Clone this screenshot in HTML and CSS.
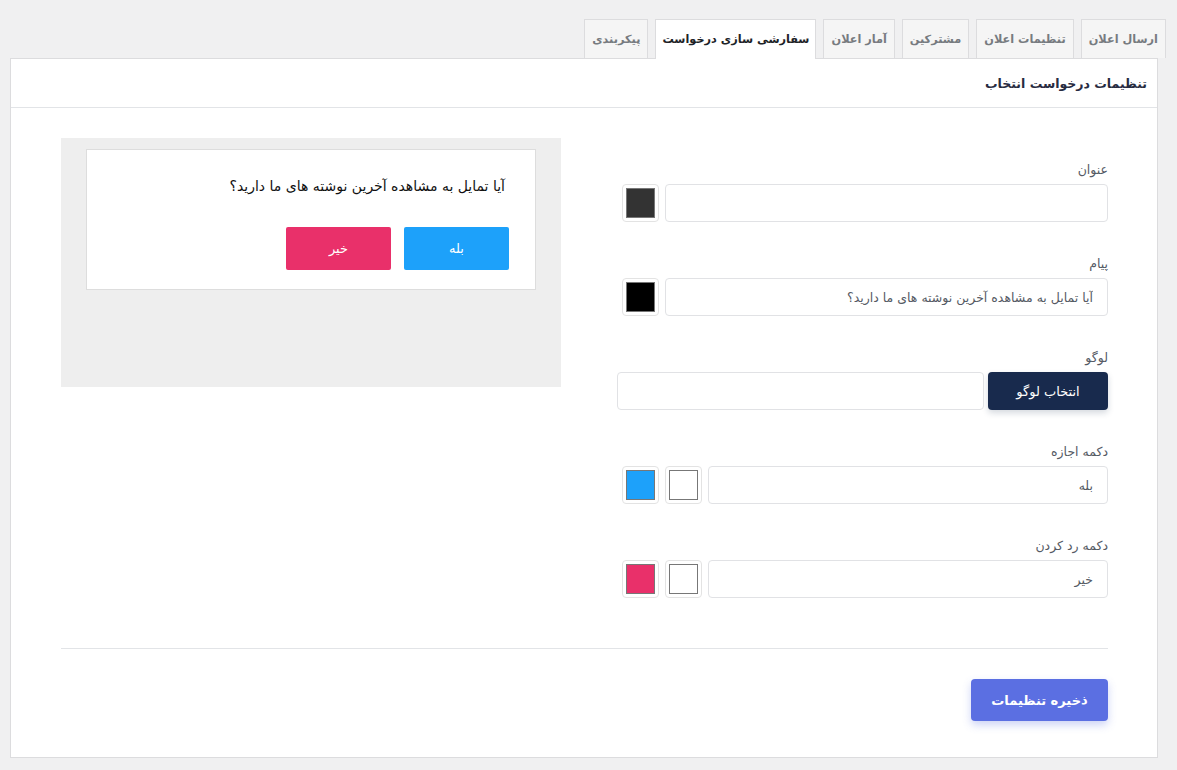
FILE: index.html
```html
<!DOCTYPE html>
<html lang="fa" dir="rtl">
<head>
	<meta charset="UTF-8">
	<meta name="viewport" content="width=device-width, initial-scale=1.0">
	<title>سفارشی سازی درخواست</title>
	<link rel="stylesheet" href="styles.css">
</head>
<body>
	<div class="wrap">
		<!-- تب ها -->
		<nav class="tabs">
			<a class="tab">ارسال اعلان</a>
			<a class="tab">تنظیمات اعلان</a>
			<a class="tab">مشترکین</a>
			<a class="tab">آمار اعلان</a>
			<a class="tab active">سفارشی سازی درخواست</a>
			<a class="tab">پیکربندی</a>
		</nav>

		<div class="panel">
			<div class="panel-head">تنظیمات درخواست انتخاب</div>

			<div class="panel-body">
				<div class="layout">
					<!-- فرم تنظیمات -->
					<form class="fields">
						<div class="field">
							<label>عنوان</label>
							<div class="row">
								<input type="text" class="text" value="">
								<span class="swatch"><i style="background: #333333;"></i></span>
							</div>
						</div>
						<div class="field">
							<label>پیام</label>
							<div class="row">
								<input type="text" class="text" value="آیا تمایل به مشاهده آخرین نوشته های ما دارید؟">
								<span class="swatch"><i style="background: #000000;"></i></span>
							</div>
						</div>
						<div class="field">
							<label>لوگو</label>
							<div class="row logo-row">
								<button type="button" class="btn-logo">انتخاب لوگو</button>
								<input type="text" class="text" value="">
							</div>
						</div>
						<div class="field">
							<label>دکمه اجازه</label>
							<div class="row">
								<input type="text" class="text" value="بله">
								<span class="swatch"><i style="background: #ffffff;"></i></span>
								<span class="swatch"><i style="background: #1da1fa;"></i></span>
							</div>
						</div>
						<div class="field">
							<label>دکمه رد کردن</label>
							<div class="row">
								<input type="text" class="text" value="خیر">
								<span class="swatch"><i style="background: #ffffff;"></i></span>
								<span class="swatch"><i style="background: #e9306a;"></i></span>
							</div>
						</div>
					</form>

					<!-- پیش نمایش -->
					<div class="preview">
						<div class="prompt">
							<p class="prompt-text">آیا تمایل به مشاهده آخرین نوشته های ما دارید؟</p>
							<div class="prompt-buttons">
								<span class="pbtn yes">بله</span>
								<span class="pbtn no">خیر</span>
							</div>
						</div>
					</div>
				</div>

				<hr class="sep">

				<div class="actions">
					<button type="button" class="btn-save">ذخیره تنظیمات</button>
				</div>
			</div>
		</div>
	</div>
</body>
</html>
```

FILE: styles.css
```css
* {
	box-sizing: border-box;
	margin: 0px;
	padding: 0px;
}

body {
	background-color: #f0f0f1;
	font-family: "DejaVu Sans", "Noto Sans", sans-serif;
	color: #3c434a;
}

.wrap {
	padding: 19px 19px 0px 10px;
}

/* تب ها */
.tabs {
	display: flex;
	gap: 7px;
	margin-right: -8px;
	height: 39px;
}

.tab {
	display: flex;
	align-items: center;
	height: 39px;
	padding: 0px 7px;
	background-color: #f5f5f5;
	border: 1px solid #dcdcde;
	border-bottom: none;
	font-size: 11.3px;
	font-weight: bold;
	color: #777b80;
	cursor: pointer;
}

.tab.active {
	position: relative;
	z-index: 1;
	height: 40px;
	padding: 0px 6px;
	background-color: #fff;
	color: #1d2327;
	letter-spacing: -0.2px;
}

/* پنل */
.panel {
	background-color: #fff;
	border: 1px solid #dcdcde;
	height: 700px;
}

.panel-head {
	height: 49px;
	padding: 0px 10px;
	display: flex;
	align-items: center;
	border-bottom: 1px solid #e2e4e7;
	font-size: 12.5px;
	font-weight: bold;
	color: #272b41;
}

.panel-body {
	padding: 30px 49px 0px 50px;
}

.layout {
	display: grid;
	grid-template-columns: 491px 500px;
	gap: 56px;
	align-items: start;
}

/* فرم */
.fields {
	display: flex;
	flex-direction: column;
	gap: 32px;
	padding-top: 22px;
}

.field label {
	display: block;
	height: 20px;
	line-height: 20px;
	margin-bottom: 4px;
	font-size: 12.5px;
	color: #555a64;
}

.row {
	display: flex;
	gap: 6px;
	padding-left: 5px;
}

.row.logo-row {
	gap: 4px;
	padding-left: 0px;
}

.text {
	flex: 1;
	min-width: 0;
	height: 38px;
	padding: 0px 14px;
	border: 1px solid #e1e2e5;
	border-radius: 4px;
	background-color: #fff;
	font-family: inherit;
	font-size: 12.5px;
	color: #555a64;
	outline: none;
}

.swatch {
	flex: none;
	width: 37px;
	height: 38px;
	padding: 3px;
	border: 1px solid #e3e3e3;
	border-radius: 4px;
	display: flex;
}

.swatch i {
	flex: 1;
	border: 1px solid #777;
}

.btn-logo {
	flex: none;
	width: 120px;
	height: 38px;
	border: none;
	border-radius: 4px;
	background-color: #182a4d;
	color: #fff;
	font-family: inherit;
	font-size: 13px;
	box-shadow: 0px 3px 6px rgba(24, 42, 77, 0.18);
	cursor: pointer;
}

/* پیش نمایش */
.preview {
	height: 249px;
	padding: 11px 25px 0px 25px;
	background-color: #eeeeee;
}

.prompt {
	height: 141px;
	padding: 24px 26px 0px 26px;
	background-color: #fff;
	border: 1px solid #dddddd;
}

.prompt-text {
	height: 24px;
	line-height: 24px;
	padding-right: 4px;
	font-size: 14px;
	color: #111;
}

.prompt-buttons {
	display: flex;
	gap: 13px;
	margin-top: 29px;
}

.pbtn {
	width: 105px;
	height: 43px;
	display: flex;
	align-items: center;
	justify-content: center;
	border-radius: 2px;
	color: #fff;
	font-size: 13px;
}

.pbtn.yes {
	background-color: #1da1fa;
}

.pbtn.no {
	background-color: #e9306a;
}

/* پایین */
.sep {
	border: none;
	border-top: 1px solid #e2e4e7;
	margin-top: 50px;
}

.actions {
	display: flex;
	margin-top: 30px;
}

.btn-save {
	width: 137px;
	height: 42px;
	border: none;
	border-radius: 4px;
	background-color: #5b6fe2;
	color: #fff;
	font-family: inherit;
	font-size: 13px;
	font-weight: bold;
	box-shadow: 0px 4px 8px rgba(91, 111, 226, 0.3);
	cursor: pointer;
}
```
